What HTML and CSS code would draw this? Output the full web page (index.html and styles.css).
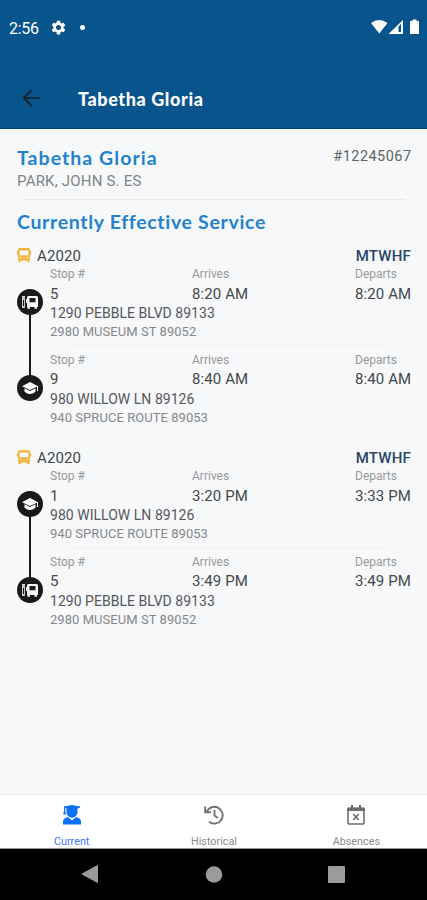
FILE: index.html
```html
<!DOCTYPE html>
<html lang="en">
<head>
<meta charset="utf-8">
<title>Tabetha Gloria</title>
<link rel="stylesheet" href="styles.css">
</head>
<body>
<svg class="defs" aria-hidden="true">
  <symbol id="bus" viewBox="0 0 14 14"><path fill-rule="evenodd" d="M2.500 0h9Q13 0 13 2v1h1v4h-1v5h-.7v2H9.800v-1.500H4.200V14H1.700v-2H1V7H0V3h1V2Q1 0 2.500 0zM2.600 2.500v4.700h8.800V2.500zM2.800 9v1h1.700V9zm6.700 0v1h1.700V9z"/></symbol>
  <symbol id="stop" viewBox="0 0 26 26"><circle cx="13" cy="13" r="13" fill="#191a1b"/><path fill="#c9cacc" d="M5 7h3v12H5z"/><path fill="#191a1b" d="M6 11h1v6H6z"/><path fill="#f5f6f7" fill-rule="evenodd" d="M11 7h8.500Q21 7 21 8.500V18h-1v1.700h-2.500V18H13v1.700h-2.500V18H10v-4H9v-4h1V8.500Q10 7 11 7zm1.500 2v4.300h6V9z"/></symbol>
  <symbol id="school" viewBox="0 0 26 26"><circle cx="13" cy="13" r="13" fill="#191a1b"/><path fill="#fff" d="M13 7l8 4.200-8 3.900-8-3.900zM7.500 13.200l5.500 2.700 5.500-2.700v3.600q-5.500 4.500-11 0zM20 11h1v5h-1z"/></symbol>
</svg>
<header class="top">
  <div class="status">
    <span class="clock">2:56</span>
    <svg class="gear" viewBox="0 0 24 24"><path fill="#fff" fill-rule="evenodd" d="M9.500 1h5l.6 3.300 2 1.200 3.200-1.200 2.500 4.300-2.600 2.200v2.400l2.600 2.200-2.500 4.300-3.200-1.200-2 1.200-.6 3.300h-5l-.6-3.300-2-1.200-3.200 1.200-2.500-4.300 2.600-2.200v-2.400L1.200 8.600l2.500-4.300 3.200 1.200 2-1.200zM12 8a4 4 0 1 0 0 8 4 4 0 0 0 0-8z"/></svg>
    <span class="dot"></span>
    <svg class="signals" viewBox="0 0 50 16"><path fill="#fff" d="M1 4Q9-2 17.500 4L9.300 14.500z"/><path fill="#fff" fill-rule="evenodd" d="M18.500 15L33 1v14zM28.500 7.500V13H31V5z"/><path fill="#fff" d="M40 2h2.500V.5h4V2H49v13h-9z"/></svg>
  </div>
  <div class="bar">
    <svg class="back" viewBox="0 0 18 18"><path d="M17.500 9H2M9.500 1L1.800 9l7.700 8" fill="none" stroke="#152431" stroke-width="1.900"/></svg>
    <h1>Tabetha Gloria</h1>
  </div>
</header>
<main>
  <section class="student">
    <div class="student-row"><h2 class="name">Tabetha Gloria</h2><span class="number">#12245067</span></div>
    <p class="school">PARK, JOHN S. ES</p>
  </section>
  <h2 class="service">Currently Effective Service</h2>

  <article class="trip">
    <div class="trip-head"><svg class="bus"><use href="#bus"/></svg><span class="route">A2020</span><b class="days">MTWHF</b></div>
    <div class="stop first">
      <svg class="pin"><use href="#stop"/></svg>
      <div class="grid"><small>Stop #</small><small>Arrives</small><small>Departs</small><span>5</span><span>8:20 AM</span><span>8:20 AM</span></div>
      <p class="addr">1290 PEBBLE BLVD 89133</p><p class="addr2">2980 MUSEUM ST 89052</p>
    </div>
    <div class="stop">
      <svg class="pin"><use href="#school"/></svg>
      <div class="grid"><small>Stop #</small><small>Arrives</small><small>Departs</small><span>9</span><span>8:40 AM</span><span>8:40 AM</span></div>
      <p class="addr">980 WILLOW LN 89126</p><p class="addr2">940 SPRUCE ROUTE 89053</p>
    </div>
  </article>

  <article class="trip">
    <div class="trip-head"><svg class="bus"><use href="#bus"/></svg><span class="route">A2020</span><b class="days">MTWHF</b></div>
    <div class="stop first">
      <svg class="pin"><use href="#school"/></svg>
      <div class="grid"><small>Stop #</small><small>Arrives</small><small>Departs</small><span>1</span><span>3:20 PM</span><span>3:33 PM</span></div>
      <p class="addr">980 WILLOW LN 89126</p><p class="addr2">940 SPRUCE ROUTE 89053</p>
    </div>
    <div class="stop">
      <svg class="pin"><use href="#stop"/></svg>
      <div class="grid"><small>Stop #</small><small>Arrives</small><small>Departs</small><span>5</span><span>3:49 PM</span><span>3:49 PM</span></div>
      <p class="addr">1290 PEBBLE BLVD 89133</p><p class="addr2">2980 MUSEUM ST 89052</p>
    </div>
  </article>
</main>
<nav class="tabs">
  <a class="tab active"><svg viewBox="0 0 20 20"><path fill="#0b72f5" d="M2 1.500L10 0l8 1.500v1.200l-2.500.7v3.800a5.500 5.500 0 0 1-11 0V3.400L3.200 3v3l.8 3.500H1.200L2 6zM1 19.500v-2.800q0-3.700 5-4.700l4 3.500 4-3.500q5 1 5 4.700v2.800z"/></svg><span>Current</span></a>
  <a class="tab"><svg viewBox="0 0 20 20"><path d="M2.600 6.800A8.400 8.400 0 1 1 5 16.800M1.200 1.500v5.800H7M10.500 5v5.500l3.300 2.600" fill="none" stroke="#707173" stroke-width="1.900"/></svg><span>Historical</span></a>
  <a class="tab"><svg viewBox="0 0 20 20"><rect x="2" y="3.500" width="16" height="15.500" rx="1" fill="none" stroke="#6b6c6e" stroke-width="1.600"/><path d="M7.200 9l5.600 6M12.800 9l-5.600 6" fill="none" stroke="#6b6c6e" stroke-width="1.700"/><path fill="#6b6c6e" d="M1.200 2.500h17.600V6H1.200zM5 0h2v3H5zM13 0h2v3h-2z"/></svg><span>Absences</span></a>
</nav>
<footer class="system">
  <svg viewBox="0 0 18 20"><path d="M16.500 1.500v17L1 10z" fill="#9b9b9b" stroke="#9b9b9b" stroke-linejoin="round"/></svg>
  <svg viewBox="0 0 18 20"><circle cx="9" cy="10.500" r="8.300" fill="#9b9b9b"/></svg>
  <svg viewBox="0 0 18 20"><rect x="0" y="2" width="17" height="17" rx="1" fill="#9b9b9b"/></svg>
</footer>
</body>
</html>
```
FILE: styles.css
```css
* { box-sizing: border-box; }
body { margin: 0; width: 427px; height: 900px; display: flex; flex-direction: column; overflow: hidden; background: #f6f8fa; font-family: Roboto, sans-serif; color: #45484b; }
h1, h2, p { margin: 0; }
.defs { position: absolute; width: 0; height: 0; }
.top { height: 129px; flex: none; background: #08548c; border-bottom: 1px solid #06467a; color: #fff; }
.status { height: 54px; display: flex; align-items: center; padding: 0 7px 0 9px; }
.clock { width: 42px; font-size: 16px; padding-top: 2px; letter-spacing: -.3px; }
.gear { width: 15px; height: 15px; }
.dot { width: 5px; height: 5px; border-radius: 50%; background: #fff; margin-left: 14px; }
.signals { width: 50px; height: 16px; margin-left: auto; }
.bar { display: flex; align-items: center; height: 44px; margin-top: 22px; padding-left: 22px; }
.back { width: 18px; height: 18px; }
h1 { margin-left: 38px; padding-top: 2px; font: 900 18px/24px Lato, sans-serif; letter-spacing: .6px; }
main { flex: 1; padding: 17px 16px 0 17px; }
.student { height: 54px; position: relative; }
.student::after { content: ""; position: absolute; left: 6px; right: 6px; bottom: 0; height: 1px; background: #e9ecef; }
.student-row { display: flex; justify-content: space-between; height: 25px; }
.name, .service { font: bold 19.500px/24px Lato, sans-serif; color: #2482cd; }
.name { letter-spacing: 1.050px; }
.number { font-size: 14.500px; line-height: 22px; letter-spacing: .45px; margin-right: -.5px; color: #606366; }
.school { font-size: 15px; line-height: 20px; letter-spacing: .2px; color: #818487; }
.service { line-height: 24px; margin: 10px 0 13px; letter-spacing: .67px; }
.trip { height: 202px; }
.trip-head { display: flex; height: 18px; align-items: center; font-size: 15px; letter-spacing: .1px; }
.bus { width: 14px; height: 14px; fill: #f3b641; margin-right: 6px; margin-top: -2px; }
.days { margin-left: auto; font-weight: 500; font-size: 15px; color: #294668; letter-spacing: .2px; }
.stop { position: relative; height: 85.500px; padding-left: 33px; }
.first::before { content: ""; position: absolute; left: 11.500px; top: 37px; width: 2.500px; height: 86px; background: #191a1b; }
.first::after { content: ""; position: absolute; left: 54px; right: 27px; bottom: 5px; height: 1px; background: #edf0f2; }
.pin { position: absolute; z-index: 1; left: 0; top: 24px; width: 26px; height: 26px; }
.grid { display: grid; grid-template-columns: 142px 163px 1fr; grid-template-rows: 18px 21px; align-items: center; font-size: 15px; letter-spacing: .1px; white-space: nowrap; }
.grid small { font-size: 12px; letter-spacing: 0; color: #96999c; }
.addr { font-size: 14px; line-height: 19px; letter-spacing: .03px; color: #56595c; }
.addr2 { font-size: 13px; line-height: 17px; letter-spacing: .05px; color: #85888b; }
.tabs { height: 55px; flex: none; display: flex; background: #fff; border-top: 1px solid #eceef0; border-bottom: 1px solid #999; }
.tab { flex: 1; display: flex; flex-direction: column; align-items: center; padding: 10px 0 0 1px; color: #8a8c8f; font-size: 10.800px; line-height: 13px; }
.tab svg { width: 20px; height: 20px; margin-bottom: 10px; }
.active { color: #4a74f5; }
.system { height: 51px; flex: none; background: #000; display: flex; justify-content: space-between; padding: 15px 81px 0; }
.system svg { width: 18px; height: 20px; }
```
